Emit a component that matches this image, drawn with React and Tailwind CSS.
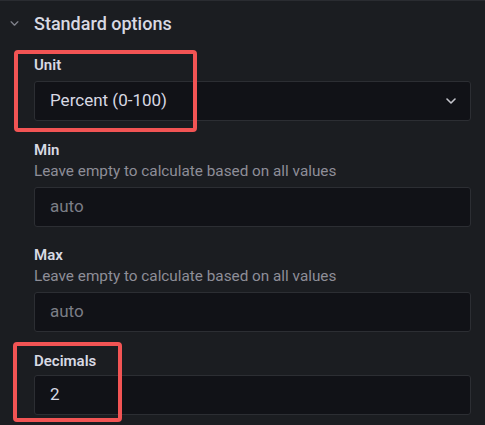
import React from 'react'

const FONT = { fontFamily: 'Roboto, "Liberation Sans", sans-serif' }

function Chevron({ className }) {
  return (
    <svg viewBox="0 0 10 6" className={className} fill="none" stroke="currentColor" strokeWidth="1.6" strokeLinecap="round" strokeLinejoin="round">
      <path d="M1 1l4 4 4-4" />
    </svg>
  )
}

function Field({ label, description, value, muted, select, labelGap = 'mb-[7px]', className = '' }) {
  return (
    <div className={className}>
      <div className={`text-[15px] leading-[18px] font-semibold text-[#d8d9e3] ${description ? 'mb-[3px]' : labelGap}`}>{label}</div>
      {description && (
        <div className="text-[15.3px] leading-[18px] text-[#8e8e98] mb-[7px]">{description}</div>
      )}
      <div className="h-[40px] rounded-[3px] border border-[#2c2e33] bg-[#111217] flex items-center pl-[15px] pr-[14px]">
        <span className={`flex-1 text-[17px] ${muted ? 'text-[#7c7e86]' : 'text-[#d8d9e3]'}`}>{value}</span>
        {select && <Chevron className="w-[10px] h-[6px] text-[#c4c5cc]" />}
      </div>
    </div>
  )
}

export default function App() {
  return (
    <div className="relative w-[485px] h-[425px] overflow-hidden bg-[#1b1d21] border-t border-[#2a2c31]" style={FONT}>
      <div className="h-[44px] flex items-center pl-[10px]">
        <Chevron className="w-[9px] h-[5px] text-[#7f818a]" />
        <span className="ml-[15px] text-[18px] font-medium text-[#d8d9e3]">Standard options</span>
      </div>

      <div className="pl-[34px] pr-[14px]">
        <Field className="mt-[11px]" label="Unit" value="Percent (0-100)" select />
        <Field className="mt-[20px]" label="Min" description="Leave empty to calculate based on all values" value="auto" muted />
        <Field className="mt-[19px]" label="Max" description="Leave empty to calculate based on all values" value="auto" muted />
        <Field className="mt-[20px]" label="Decimals" value="2" labelGap="mb-[5px]" />
      </div>

      {/* highlight boxes */}
      <div className="absolute left-[14px] top-[49px] w-[183px] h-[82px] rounded-[4px] border-4 border-[#f25454] pointer-events-none" />
      <div className="absolute left-[13px] top-[341px] w-[109px] h-[80px] rounded-[4px] border-4 border-[#f25454] pointer-events-none" />
    </div>
  )
}
